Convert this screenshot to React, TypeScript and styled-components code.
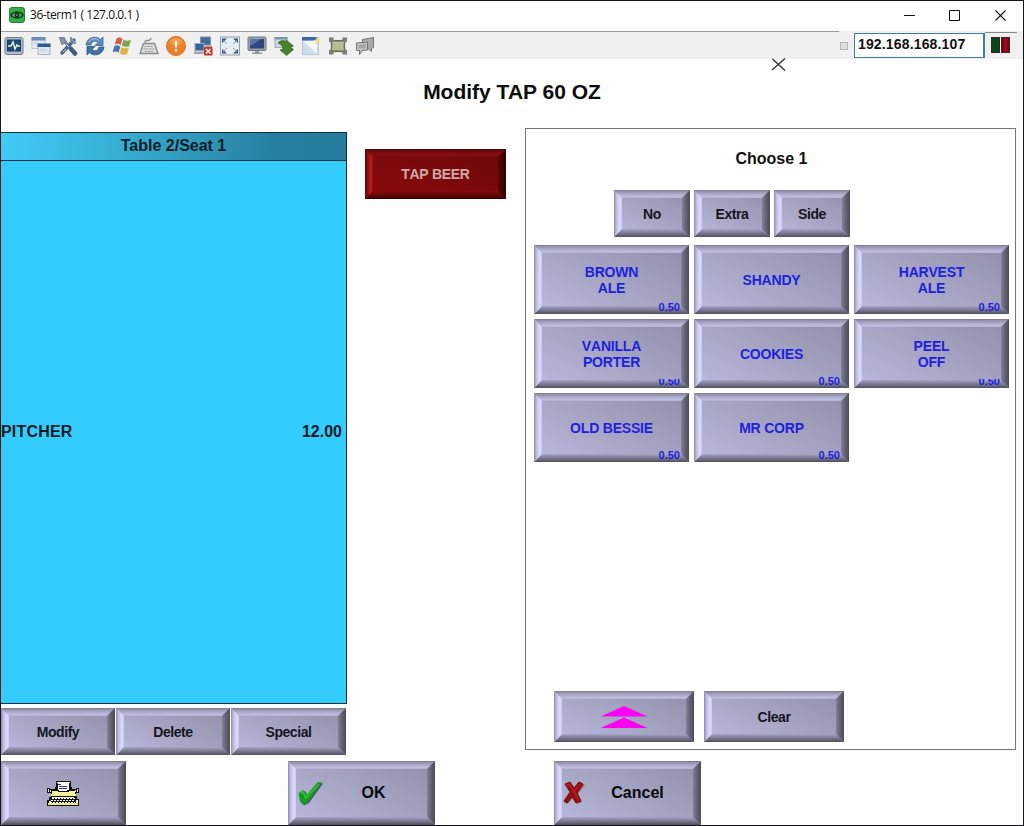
import React from "react";
import styled, { createGlobalStyle, css } from "styled-components";

const GlobalStyle = createGlobalStyle`
  * { box-sizing: border-box; }
  body { margin: 0; background: #fff; font-family: "Liberation Sans", Arial, sans-serif; }
`;

const Window = styled.div`
  position: relative;
  width: 1024px;
  height: 826px;
  display: flex;
  flex-direction: column;
  border: 1px solid #16161a;
  background: #fefefe;
  overflow: hidden;
`;

const TitleBar = styled.header`
  height: 30px;
  flex: none;
  display: flex;
  align-items: center;
  padding: 0 0 2px 8px;
`;

const WindowTitle = styled.span`
  flex: 1;
  margin-left: 5px;
  font: 12px/16px "Open Sans", sans-serif;
  letter-spacing: -0.45px;
  color: #111;
  white-space: pre;
`;

const WindowControls = styled.div`
  display: flex;
  width: 136px;
`;

const ControlButton = styled.button`
  width: 45.5px;
  height: 28px;
  padding: 0;
  display: grid;
  place-items: center;
  border: 0;
  background: none;
`;

const Toolbar = styled.div`
  height: 28px;
  flex: none;
  display: flex;
  align-items: center;
  background: #f0f0f0;
`;

const ToolIcons = styled.div`
  width: 838px;
  height: 28px;
  display: flex;
  align-items: center;
  gap: 7px;
  padding: 0 0 0 3px;
  border-top: 1px solid #9b9b9b;
`;

const ToolIcon = styled.svg`
  width: 20px;
  height: 20px;
  flex: none;
`;

const StatusBox = styled.i`
  width: 8px;
  height: 8px;
  margin: 2px 0 0 1px;
  border: 1px solid #b5b5b5;
  background: #dedede;
`;

const AddressField = styled.div`
  width: 131px;
  height: 25px;
  margin-left: 6px;
  padding-left: 3px;
  border: 1px solid #3c7f9f;
  border-right-width: 2px;
  background: #fff;
  font: bold 14px/21px "Liberation Sans", Arial, sans-serif;
  letter-spacing: 0.15px;
  color: #111;
`;

const Lights = styled.div`
  width: 32px;
  height: 26px;
  display: flex;
  gap: 1px;
  padding: 4px 0 0 6px;
  border-top: 1px solid #85858c;
`;

const Light = styled.i<{ $tone: "green" | "red" }>`
  width: 9px;
  height: 16px;
  border: 1px solid #3a2526;
  background: ${(p) => (p.$tone === "green" ? "#0a4617" : "linear-gradient(90deg, #6e0010, #a80a1e 50%, #6c0010)")};
`;

const Heading = styled.h1`
  height: 69px;
  flex: none;
  margin: 0;
  font-size: 21px;
  line-height: 65px;
  text-align: center;
  color: #0c0c0c;
`;

const Workspace = styled.main`
  height: 633px;
  flex: none;
  display: flex;
  align-items: flex-start;
`;

const OrderColumn = styled.section`
  width: 346px;
  padding-top: 4px;
`;

const Ticket = styled.div`
  height: 572px;
  display: flex;
  flex-direction: column;
  border: 1px solid #10303e;
  border-left: 0;
  background: #33ccff;
`;

const TicketHeader = styled.div`
  height: 28px;
  flex: none;
  border-bottom: 1px solid #10303e;
  background: linear-gradient(95deg, #40cbf8 0%, #38b4da 28%, #2f94b6 60%, #2780a1 78%, #257c9d 100%);
  font-size: 16px;
  font-weight: bold;
  line-height: 26px;
  text-align: center;
  color: #0a1c26;
`;

const TicketBody = styled.div`
  flex: 1;
  display: flex;
  align-items: center;
`;

const TicketLine = styled.div`
  flex: 1;
  display: flex;
  justify-content: space-between;
  padding-right: 4px;
  font-size: 16px;
  font-weight: bold;
  line-height: 18px;
  color: #0b1a22;
`;

const ItemName = styled.span`
  letter-spacing: 0.2px;
`;

const ButtonRow = styled.div<{ $gap: number; $top?: number; $left?: number }>`
  display: flex;
  gap: ${(p) => p.$gap}px;
  margin: ${(p) => p.$top ?? 0}px 0 0 ${(p) => p.$left ?? 0}px;
`;

type Tone = "steel" | "red";

const tones = {
  steel: {
    face: "linear-gradient(28deg, #bcbbe2 0%, #aaa9c8 38%, #9b9ab7 72%, #908fab 100%)",
    top: "linear-gradient(180deg, #77778b 0, #9392ac 18%, #aeadcc 55%, #bdbcdf 80%, #b3b2d2 100%)",
    left: "linear-gradient(90deg, #8b8aa4 0, #bdbce0 30%, #dddcff 72%, #cbcaee 100%)",
    right: "linear-gradient(90deg, #838297 0, #656475 45%, #4c4b59 100%)",
    bottom: "linear-gradient(180deg, #a5a4c5 0, #7b7a92 50%, #504f5d 100%)",
  },
  red: {
    face: "linear-gradient(20deg, #8b090c 0%, #7d090b 45%, #6c0909 100%)",
    top: "linear-gradient(180deg, #4c0506 0, #7a0b0d 40%, #860d0f 75%, #780a0c 100%)",
    left: "linear-gradient(90deg, #5c0708 0, #8f1012 40%, #b82022 75%, #95090c 100%)",
    right: "linear-gradient(90deg, #600707 0, #450304 50%, #2e0203 100%)",
    bottom: "linear-gradient(180deg, #860a0c 0, #670809 50%, #350304 100%)",
  },
};

const Key = styled.button<{ $w: number; $h: number; $tone?: Tone; $size?: number; $ink?: string; $track?: number }>`
  position: relative;
  width: ${(p) => p.$w}px;
  height: ${(p) => p.$h}px;
  flex: none;
  display: flex;
  align-items: center;
  justify-content: center;
  padding: 0;
  border: 0;
  background: ${(p) => tones[p.$tone ?? "steel"].face};
  font: bold ${(p) => p.$size ?? 14}px/16px "Liberation Sans", Arial, sans-serif;
  letter-spacing: ${(p) => p.$track ?? -0.45}px;
  font-kerning: none;
  text-align: center;
  white-space: pre-line;
  color: ${(p) => p.$ink ?? "#15151f"};
`;

const sides = {
  top: css`inset: 0 0 auto 0; height: 8px; clip-path: polygon(0 0, 100% 0, calc(100% - 8px) 100%, 8px 100%);`,
  bottom: css`inset: auto 0 0 0; height: 8px; clip-path: polygon(8px 0, calc(100% - 8px) 0, 100% 100%, 0 100%);`,
  left: css`inset: 0 auto 0 0; width: 8px; clip-path: polygon(0 0, 100% 8px, 100% calc(100% - 8px), 0 100%);`,
  right: css`inset: 0 0 0 auto; width: 8px; clip-path: polygon(0 8px, 100% 0, 100% 100%, 0 calc(100% - 8px));`,
};

const Edge = styled.i<{ $side: keyof typeof sides; $tone: Tone }>`
  position: absolute;
  ${(p) => sides[p.$side]}
  background: ${(p) => tones[p.$tone][p.$side]};
`;

const Price = styled.span<{ $cut?: boolean }>`
  position: absolute;
  right: 9px;
  bottom: 0;
  font-size: 11px;
  line-height: 14px;
  letter-spacing: 0;
  ${(p) => p.$cut && "clip-path: inset(5px 0 0 0);"}
`;

const Options = styled.section`
  width: 491px;
  height: 622px;
  margin-left: 19px;
  padding: 0 0 7px 8px;
  display: flex;
  flex-direction: column;
  border: 1px solid #77777b;
`;

const OptionsTitle = styled.h2`
  width: 475px;
  height: 61px;
  margin: 0;
  font-size: 16px;
  line-height: 60px;
  text-align: center;
  color: #111;
`;

const ChoiceGrid = styled.div`
  display: grid;
  grid-template-columns: repeat(3, 155px);
  gap: 5px;
  margin: 8px 0 auto;
`;

const Footer = styled.footer`
  display: flex;
  height: 64px;
`;

const FooterSlot = styled.div<{ $gap: number }>`
  margin-left: ${(p) => p.$gap}px;
`;

const PrintIcon = styled.svg`
  margin-right: 2px;
`;

const KeyIcon = styled.svg<{ $left: number }>`
  flex: none;
  margin-left: ${(p) => p.$left}px;
`;

const IconLabel = styled.span<{ $trim: number }>`
  flex: 1;
  padding-right: ${(p) => p.$trim}px;
`;

const CloseMark = styled.svg`
  position: absolute;
  left: 770px;
  top: 57px;
`;

type BevelKeyProps = React.ComponentProps<typeof Key>;

function BevelKey({ children, $tone = "steel", ...rest }: BevelKeyProps) {
  return (
    <Key $tone={$tone} {...rest}>
      {(["top", "bottom", "left", "right"] as const).map((s) => (
        <Edge key={s} $side={s} $tone={$tone} />
      ))}
      {children}
    </Key>
  );
}

const choices = [
  { name: "BROWN\nALE", price: "0.50" },
  { name: "SHANDY" },
  { name: "HARVEST\nALE", price: "0.50" },
  { name: "VANILLA\nPORTER", price: "0.50", cut: true },
  { name: "COOKIES", price: "0.50" },
  { name: "PEEL\nOFF", price: "0.50", cut: true },
  { name: "OLD BESSIE", price: "0.50" },
  { name: "MR CORP", price: "0.50" },
];

const toolGlyphs: React.ReactNode[] = [
  // activity monitor
  <>
    <rect x="1" y="1.500" width="18" height="17" rx="2" fill="#b3bdc9" stroke="#6d7b8e" />
    <rect x="3.500" y="4" width="13" height="11" fill="#1c4a7c" stroke="#173a60" />
    <path d="M4 10h3l2-4 2 7 2-4 1 1h2" fill="none" stroke="#e8f3da" strokeWidth="1.500" />
  </>,
  // cascaded windows
  <>
    <rect x="1" y="1.500" width="13" height="11" fill="#e3e8ee" stroke="#b9c4d1" />
    <path d="M.5 1h14v3.500H.5z" fill="#6a8db9" />
    <rect x="7" y="8.500" width="12" height="10" fill="#dfe5ed" stroke="#aab7c8" />
    <path d="M6.500 7.500h13V11h-13z" fill="#31598f" />
    <path d="M3 7h4M9 14h7" stroke="#b8c8da" />
  </>,
  // crossed tools
  <>
    <path d="M4 3l13 14" stroke="#6b7b8a" strokeWidth="3" />
    <path d="M16 4L4 17" stroke="#4a6787" strokeWidth="3.500" strokeLinecap="round" />
    <path d="M13 1l0 5 5 1M2 2l4 0 2 4-4 2z" fill="#8b99a6" stroke="#77889a" strokeWidth="1.800" />
    <path d="M13 13l4 4.500" stroke="#3e5c7e" strokeWidth="4.500" strokeLinecap="round" />
    <path d="M5 16l3-3M8 8l3 3" stroke="#cbd6e2" />
  </>,
  // refresh
  <>
    <path d="M1 9C2 1 11-1 15.500 3.500L18 1v8.500h-8L13 6.500C10 4 6.500 5.500 6 9z" fill="#5f8ab8" stroke="#386797" strokeWidth=".8" />
    <path d="M19 11c-1 8-10 10-14.500 5.500L2 19v-8.500h8l-3 3c3 2.500 6.500 1 7-2.500z" fill="#3f70a6" stroke="#2b537f" strokeWidth=".8" />
    <path d="M4 6c2-4 7-4 10-1.500" fill="none" stroke="#b4cde6" />
  </>,
  // four-pane flag
  <>
    <path d="M4.500 2.500c2-1.500 4-1.500 6 .5L8.700 9.200c-2-1.700-4-1.700-6-.5z" fill="#cf5f45" />
    <path d="M11.500 3.500c2.500 1.500 5 1.500 7.500.3l-1.800 6.400c-2.500 1-5 .8-7.400-.7z" fill="#7ba350" />
    <path d="M2.400 10c2-1.200 4-1.200 6 .5L6.600 16.800c-2-1.700-4-1.700-6-.5z" fill="#4a76b0" />
    <path d="M9.500 11c2.500 1.500 5 1.700 7.400.6l-1.800 6.500c-2.500 1-5 .8-7.400-.7z" fill="#dfb445" />
  </>,
  // keyboard
  <>
    <path d="M6 7c-1-5 6 0 6-5" fill="none" stroke="#8a8a8a" strokeWidth="1.300" />
    <path d="M4.500 7.500h11l3.500 10H1z" fill="#dedede" stroke="#8d8d8d" strokeWidth="1.400" />
    <path d="M5.500 10.500h9M4.500 13h11M6 15.500h8" stroke="#969696" strokeWidth="1.200" strokeDasharray="2 1" />
  </>,
  // alert
  <>
    <circle cx="10" cy="10" r="9.500" fill="#e9802e" stroke="#d9701f" />
    <ellipse cx="10" cy="5.500" rx="6.500" ry="3.800" fill="#f7a45c" opacity=".7" />
    <path d="M10 4.500v7M10 13v2.500" stroke="#fff3e5" strokeWidth="2.200" />
  </>,
  // disconnect
  <>
    <rect x="7.500" y="1" width="10" height="8" fill="#3f6b9e" stroke="#8593a3" />
    <rect x="2" y="7.500" width="9" height="7" fill="#37659b" stroke="#9aa6b3" />
    <path d="M1 15.500h11V18H1zM12 9.500h7V12h-7z" fill="#a0a8b2" />
    <rect x="11" y="11" width="8.500" height="8.500" rx="1" fill="#cf3327" />
    <path d="M13 13l4.500 4.500M17.500 13L13 17.500" stroke="#fff" strokeWidth="1.500" />
  </>,
  // full screen
  <>
    <rect x=".5" y="1" width="19" height="18" fill="#e6edf3" stroke="#8fa0b2" />
    <path d="M2 7V2.500h5zM13 2.500h5V7zM2 13v4.500h5zM18 13v4.500h-5z" fill="#34587f" />
    <path d="M3 4l4 4M17 4l-4 4M3 16l4-4M17 16l-4-4" stroke="#8ba1b8" />
  </>,
  // monitor
  <>
    <rect x="1" y="1" width="18" height="13.500" rx="1" fill="#9c9da5" stroke="#777982" />
    <path d="M3 3h14v9.500H3z" fill="#2c467f" />
    <path d="M3 3h11l-8 5.500-3 1z" fill="#5873ad" />
    <path d="M8 15h4v1.500h3V18H5v-1.500h3z" fill="#96979d" />
  </>,
  // transfer
  <>
    <rect x="1" y="1.500" width="12" height="10" fill="#ccd6de" stroke="#9cacba" />
    <path d="M.5 1h13v2.500H.5z" fill="#7b96b0" />
    <path d="M4 7c3-3 6-3 8-1V4l7.500 6-3 1 3 2.500-7 6-6.500-5.500 3-1C8.500 9.500 7 8 4 7z" fill="#47812f" stroke="#2d611c" strokeWidth=".7" />
  </>,
  // window highlight
  <>
    <rect x="1.500" y="1.500" width="16" height="17" fill="#cfdded" stroke="#b7c9df" />
    <path d="M1 1h15v3.500H1z" fill="#3f66a8" />
    <path d="M2 5l14 13V5z" fill="#f4f7fb" />
    <path d="M15.500 0l1 3 3-1-1.500 3 2 2-3.500-.5-1.500 3-.5-3.500-2-2 3-.5z" fill="#ebe27c" />
  </>,
  // region
  <>
    <path d="M3 4c4 1 10 1 14 0-1 4-1 8 0 12-4-1-10-1-14 0 1-4 1-8 0-12z" fill="#b7bb98" stroke="#6a6d61" strokeWidth="1.500" />
    <path d="M1 1.500h4.500V6H1zM14.500 1.500H19V6h-4.500zM1 14h4.500v4.500H1zM14.500 14H19v4.500h-4.500z" fill="#7d7f77" />
  </>,
  // chat
  <>
    <path d="M7.500 3.500l11-2v10l-2 1v3l-3-2.500-6 .5z" fill="#a9a9a9" stroke="#747474" />
    <path d="M1.500 7l11-1v8l-5 .5-3 4v-4h-3z" fill="#c2c2c2" stroke="#747474" />
    <path d="M3.500 9l7-.7V12l-7 .5z" fill="#a5a5a5" />
  </>,
];

function AppLogo() {
  return (
    <svg width="16" height="16" viewBox="0 0 16 16">
      <rect x=".5" y=".5" width="15" height="15" rx="2.500" fill="#35ad49" stroke="#258337" />
      <path d="M1 8c3-5 11-5 14 0-3 5-11 5-14 0z" fill="#173f20" />
      <path d="M3 8c2-3 8-3 10 0-2 3-8 3-10 0z" fill="#54a960" />
      <circle cx="8" cy="8" r="2.400" fill="#102f17" />
      <circle cx="8" cy="8" r=".8" fill="#9fd3a6" />
    </svg>
  );
}

function Typewriter() {
  return (
    <PrintIcon width="34" height="27" viewBox="0 0 34 27" shapeRendering="crispEdges">
      <path d="M1 8h3v1h5V7h17v2h4V8h3v5h-3v3h1v3h2v7H1v-6h2v-3h2v-4H1z" fill="#111" />
      <path d="M6 11h23v3H6zM5 14h25v2H5z" fill="#f6f39c" />
      <path d="M7 13h20v3H7z" fill="#f6f39c" />
      <path d="M2 9h1v3H2zM31 9h1v3h-1zM4 10h1v2H4zM29 10h1v2h-1z" fill="#e4e4f6" />
      <path d="M10 1h15v9h-2v2H12v-2h-2z" fill="#111" />
      <path d="M11 2h13l-1 2v6h-2v1h-8v-1h-1V4z" fill="#fff" />
      <path d="M12 4.500h3M13 6.500h8M13 8.500h8" stroke="#2929bd" />
      <path d="M6 17h22v1H6z" fill="#f6f39c" />
      <path d="M6 18.500h23M5 20.500h24M4 22.500h25" stroke="#fff" strokeDasharray="2 1" />
      <path d="M2 23h30v2H2z" fill="#efe77f" />
      <path d="M3 21h2v2H3zM30 20h2v3h-2z" fill="#f6f39c" />
    </PrintIcon>
  );
}

export default function App() {
  return (
    <Window>
      <GlobalStyle />
      <TitleBar>
        <AppLogo />
        <WindowTitle>36-term1 ( 127.0.0.1 )</WindowTitle>
        <WindowControls>
          <ControlButton aria-label="Minimize">
            <svg width="11" height="11"><path d="M0 5.500h11" stroke="#111" /></svg>
          </ControlButton>
          <ControlButton aria-label="Maximize">
            <svg width="11" height="11"><path d="M.5.5h10v10H.5z" fill="none" stroke="#111" /></svg>
          </ControlButton>
          <ControlButton aria-label="Close">
            <svg width="11" height="11"><path d="M.5.5l10 10M10.500.5l-10 10" stroke="#111" strokeWidth="1.100" /></svg>
          </ControlButton>
        </WindowControls>
      </TitleBar>
      <Toolbar>
        <ToolIcons>
          {toolGlyphs.map((glyph, i) => (
            <ToolIcon key={i} viewBox="0 0 20 20">{glyph}</ToolIcon>
          ))}
        </ToolIcons>
        <StatusBox />
        <AddressField>192.168.168.107</AddressField>
        <Lights>
          <Light $tone="green" />
          <Light $tone="red" />
        </Lights>
      </Toolbar>

      <Heading>Modify TAP 60 OZ</Heading>

      <Workspace>
        <OrderColumn>
          <Ticket>
            <TicketHeader>Table 2/Seat 1</TicketHeader>
            <TicketBody>
              <TicketLine>
                <ItemName>PITCHER</ItemName>
                <span>12.00</span>
              </TicketLine>
            </TicketBody>
          </Ticket>
          <ButtonRow $gap={1} $top={4}>
            <BevelKey $w={114} $h={47}>Modify</BevelKey>
            <BevelKey $w={114} $h={47}>Delete</BevelKey>
            <BevelKey $w={115} $h={47}>Special</BevelKey>
          </ButtonRow>
        </OrderColumn>

        <ButtonRow $gap={0} $top={21} $left={18}>
          <BevelKey $w={141} $h={50} $tone="red" $ink="#cfaaa6" $track={-0.3}>TAP BEER</BevelKey>
        </ButtonRow>

        <Options>
          <OptionsTitle>Choose 1</OptionsTitle>
          <ButtonRow $gap={4} $left={80}>
            <BevelKey $w={76} $h={47}>No</BevelKey>
            <BevelKey $w={76} $h={47}>Extra</BevelKey>
            <BevelKey $w={76} $h={47}>Side</BevelKey>
          </ButtonRow>
          <ChoiceGrid>
            {choices.map((c) => (
              <BevelKey key={c.name} $w={155} $h={69} $ink="#211fdf" $track={-0.2}>
                {c.name}
                {c.price && <Price $cut={c.cut}>{c.price}</Price>}
              </BevelKey>
            ))}
          </ChoiceGrid>
          <ButtonRow $gap={10} $left={20}>
            <BevelKey $w={140} $h={51} aria-label="Scroll up">
              <svg width="48" height="22" viewBox="0 0 48 22">
                <path d="M24 0l23.500 10.500H.5zM24 11.500L47.500 22H.5z" fill="#ff00f6" />
              </svg>
            </BevelKey>
            <BevelKey $w={140} $h={51}>Clear</BevelKey>
          </ButtonRow>
        </Options>
      </Workspace>

      <Footer>
        <BevelKey $w={125} $h={64} aria-label="Print"><Typewriter /></BevelKey>
        <FooterSlot $gap={162}>
          <BevelKey $w={147} $h={64} $size={16} $track={0} $ink="#08080c">
            <KeyIcon $left={10} width="26" height="27" viewBox="0 0 26 27">
              <path d="M2 14l5-3 3 5L21 3l4 .5L11 23l-5 2.500-2.500-3z" fill="#35305a" opacity=".75" />
              <path d="M.5 13l5-3 3 5L20 2l4 .5L10 22l-5 2.500-3-3z" fill="#119c1d" />
              <path d="M2.500 13.500l2.500-1.500 3 6L21 4" fill="none" stroke="#30c038" strokeWidth="1.800" />
            </KeyIcon>
            <IconLabel $trim={12}>OK</IconLabel>
          </BevelKey>
        </FooterSlot>
        <FooterSlot $gap={119}>
          <BevelKey $w={147} $h={64} $size={16} $track={0} $ink="#08080c">
            <KeyIcon $left={9} width="22" height="25" viewBox="0 0 22 25">
              <path d="M3 4l5-2 4 6 6-6 4 2-7 9 4 8-5 2-4-6-5 6-4-2 7-9z" fill="#8f766f" />
              <path d="M2 3l5-2 4 6 5-6 4 2-6 9 4 8-5 2-4-6-5 6-3-2 6-9z" fill="#990d12" stroke="#6e080c" strokeWidth=".9" />
              <path d="M4 4l2-1 6 9 4 8M17 3l-6 8" fill="none" stroke="#c62b28" />
            </KeyIcon>
            <IconLabel $trim={11}>Cancel</IconLabel>
          </BevelKey>
        </FooterSlot>
      </Footer>

      <CloseMark width="16" height="13" viewBox="0 0 16 13">
        <path d="M1.500 1l12.500 11.500M14 .5L1 12" stroke="#333" strokeWidth="1.400" />
      </CloseMark>
    </Window>
  );
}
